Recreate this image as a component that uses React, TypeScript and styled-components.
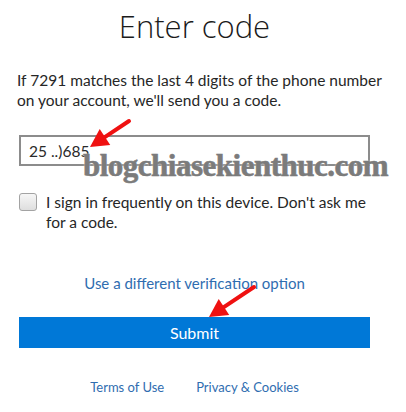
import React from "react";
import styled, { createGlobalStyle } from "styled-components";

const Global = createGlobalStyle`
  html, body { margin: 0; padding: 0; background: #ffffff; }
  body { font-family: Lato, "Open Sans", Arial, sans-serif; color: #1f1f1f; }
`;

const Page = styled.div`
  position: relative;
  width: 406px;
  height: 412px;
  box-sizing: border-box;
  padding: 6px 36px 0 19px;
  overflow: hidden;
`;

const Title = styled.h1`
  margin: 0;
  font-family: "Open Sans", sans-serif;
  font-weight: 300;
  font-size: 31px;
  line-height: 40px;
  text-align: center;
  color: #1b1b1b;
`;

const Lead = styled.p`
  margin: 24px 0 0 -2px;
  font-size: 15.5px;
  line-height: 20px;
  color: #262626;
  white-space: nowrap;
`;

const CodeInput = styled.div`
  margin-top: 25px;
  height: 31px;
  box-sizing: border-box;
  border: 2px solid #8c8c8c;
  padding: 0 8px;
  display: flex;
  align-items: center;
  font-size: 15.5px;
  color: #2a2a2a;
`;

const CheckRow = styled.label`
  margin-top: 26px;
  display: flex;
  gap: 9px;
  align-items: flex-start;
`;

const Box = styled.span`
  flex: none;
  width: 18px;
  height: 18px;
  margin-top: 1px;
  box-sizing: border-box;
  border: 1px solid #a3a3a3;
  border-radius: 3px;
  background: linear-gradient(#f6f6f6, #dedede);
`;

const CheckText = styled.span`
  font-size: 15.5px;
  line-height: 20px;
  color: #262626;
  white-space: nowrap;
`;

const Link = styled.a<{ $small?: boolean }>`
  color: #2f6db0;
  text-decoration: none;
  font-size: ${(p) => (p.$small ? "13px" : "15px")};
`;

const AltRow = styled.div`
  margin-top: 41px;
  text-align: center;
  line-height: 20px;
`;

const Submit = styled.button`
  margin-top: 24px;
  width: 100%;
  height: 31px;
  border: none;
  background: #0078d7;
  color: #ffffff;
  font-family: Lato, sans-serif;
  font-size: 16px;
  padding: 0;
`;

const Footer = styled.div`
  margin-top: 29px;
  display: flex;
  justify-content: center;
  gap: 32px;
  line-height: 20px;
`;

const Watermark = styled.div`
  position: absolute;
  left: 83px;
  top: 148px;
  font-family: "Liberation Serif", serif;
  font-weight: 700;
  font-size: 31px;
  letter-spacing: -0.5px;
  line-height: 36px;
  color: #7b7b7b;
  -webkit-text-stroke: 0.6px #7b7b7b;
  text-shadow: 0 0 2px #ffffff;
  white-space: nowrap;
`;

const Overlay = styled.svg`
  position: absolute;
  left: 0;
  top: 0;
  pointer-events: none;
`;

const Arrow = ({ x1, y1, x2, y2 }: { x1: number; y1: number; x2: number; y2: number }) => {
  const dx = x2 - x1;
  const dy = y2 - y1;
  const len = Math.hypot(dx, dy);
  const ux = dx / len;
  const uy = dy / len;
  const head = 18;
  const half = 9.5;
  const bx = x2 - ux * head;
  const by = y2 - uy * head;
  const px = -uy;
  const py = ux;
  return (
    <g>
      <line x1={x1} y1={y1} x2={bx + ux * 2} y2={by + uy * 2} stroke="#ef1111" strokeWidth={4} strokeLinecap="round" />
      <polygon
        points={`${x2},${y2} ${bx + px * half},${by + py * half} ${bx - px * half},${by - py * half}`}
        fill="#ef1111"
      />
    </g>
  );
};

export default function App() {
  return (
    <>
      <Global />
      <Page>
        <Title>Enter code</Title>
        <Lead>
          If 7291 matches the last 4 digits of the phone number
          <br />
          on your account, we'll send you a code.
        </Lead>
        <CodeInput>25 ..)685</CodeInput>
        <CheckRow>
          <Box />
          <CheckText>
            I sign in frequently on this device. Don't ask me
            <br />
            for a code.
          </CheckText>
        </CheckRow>
        <AltRow>
          <Link href="#">Use a different verification option</Link>
        </AltRow>
        <Submit>Submit</Submit>
        <Footer>
          <Link href="#" $small>Terms of Use</Link>
          <Link href="#" $small>Privacy &amp; Cookies</Link>
        </Footer>
        <Watermark>blogchiasekienthuc.com</Watermark>
        <Overlay width={406} height={412}>
          <Arrow x1={129} y1={121} x2={90} y2={147} />
          <Arrow x1={254} y1={287} x2={209} y2={317} />
        </Overlay>
      </Page>
    </>
  );
}
